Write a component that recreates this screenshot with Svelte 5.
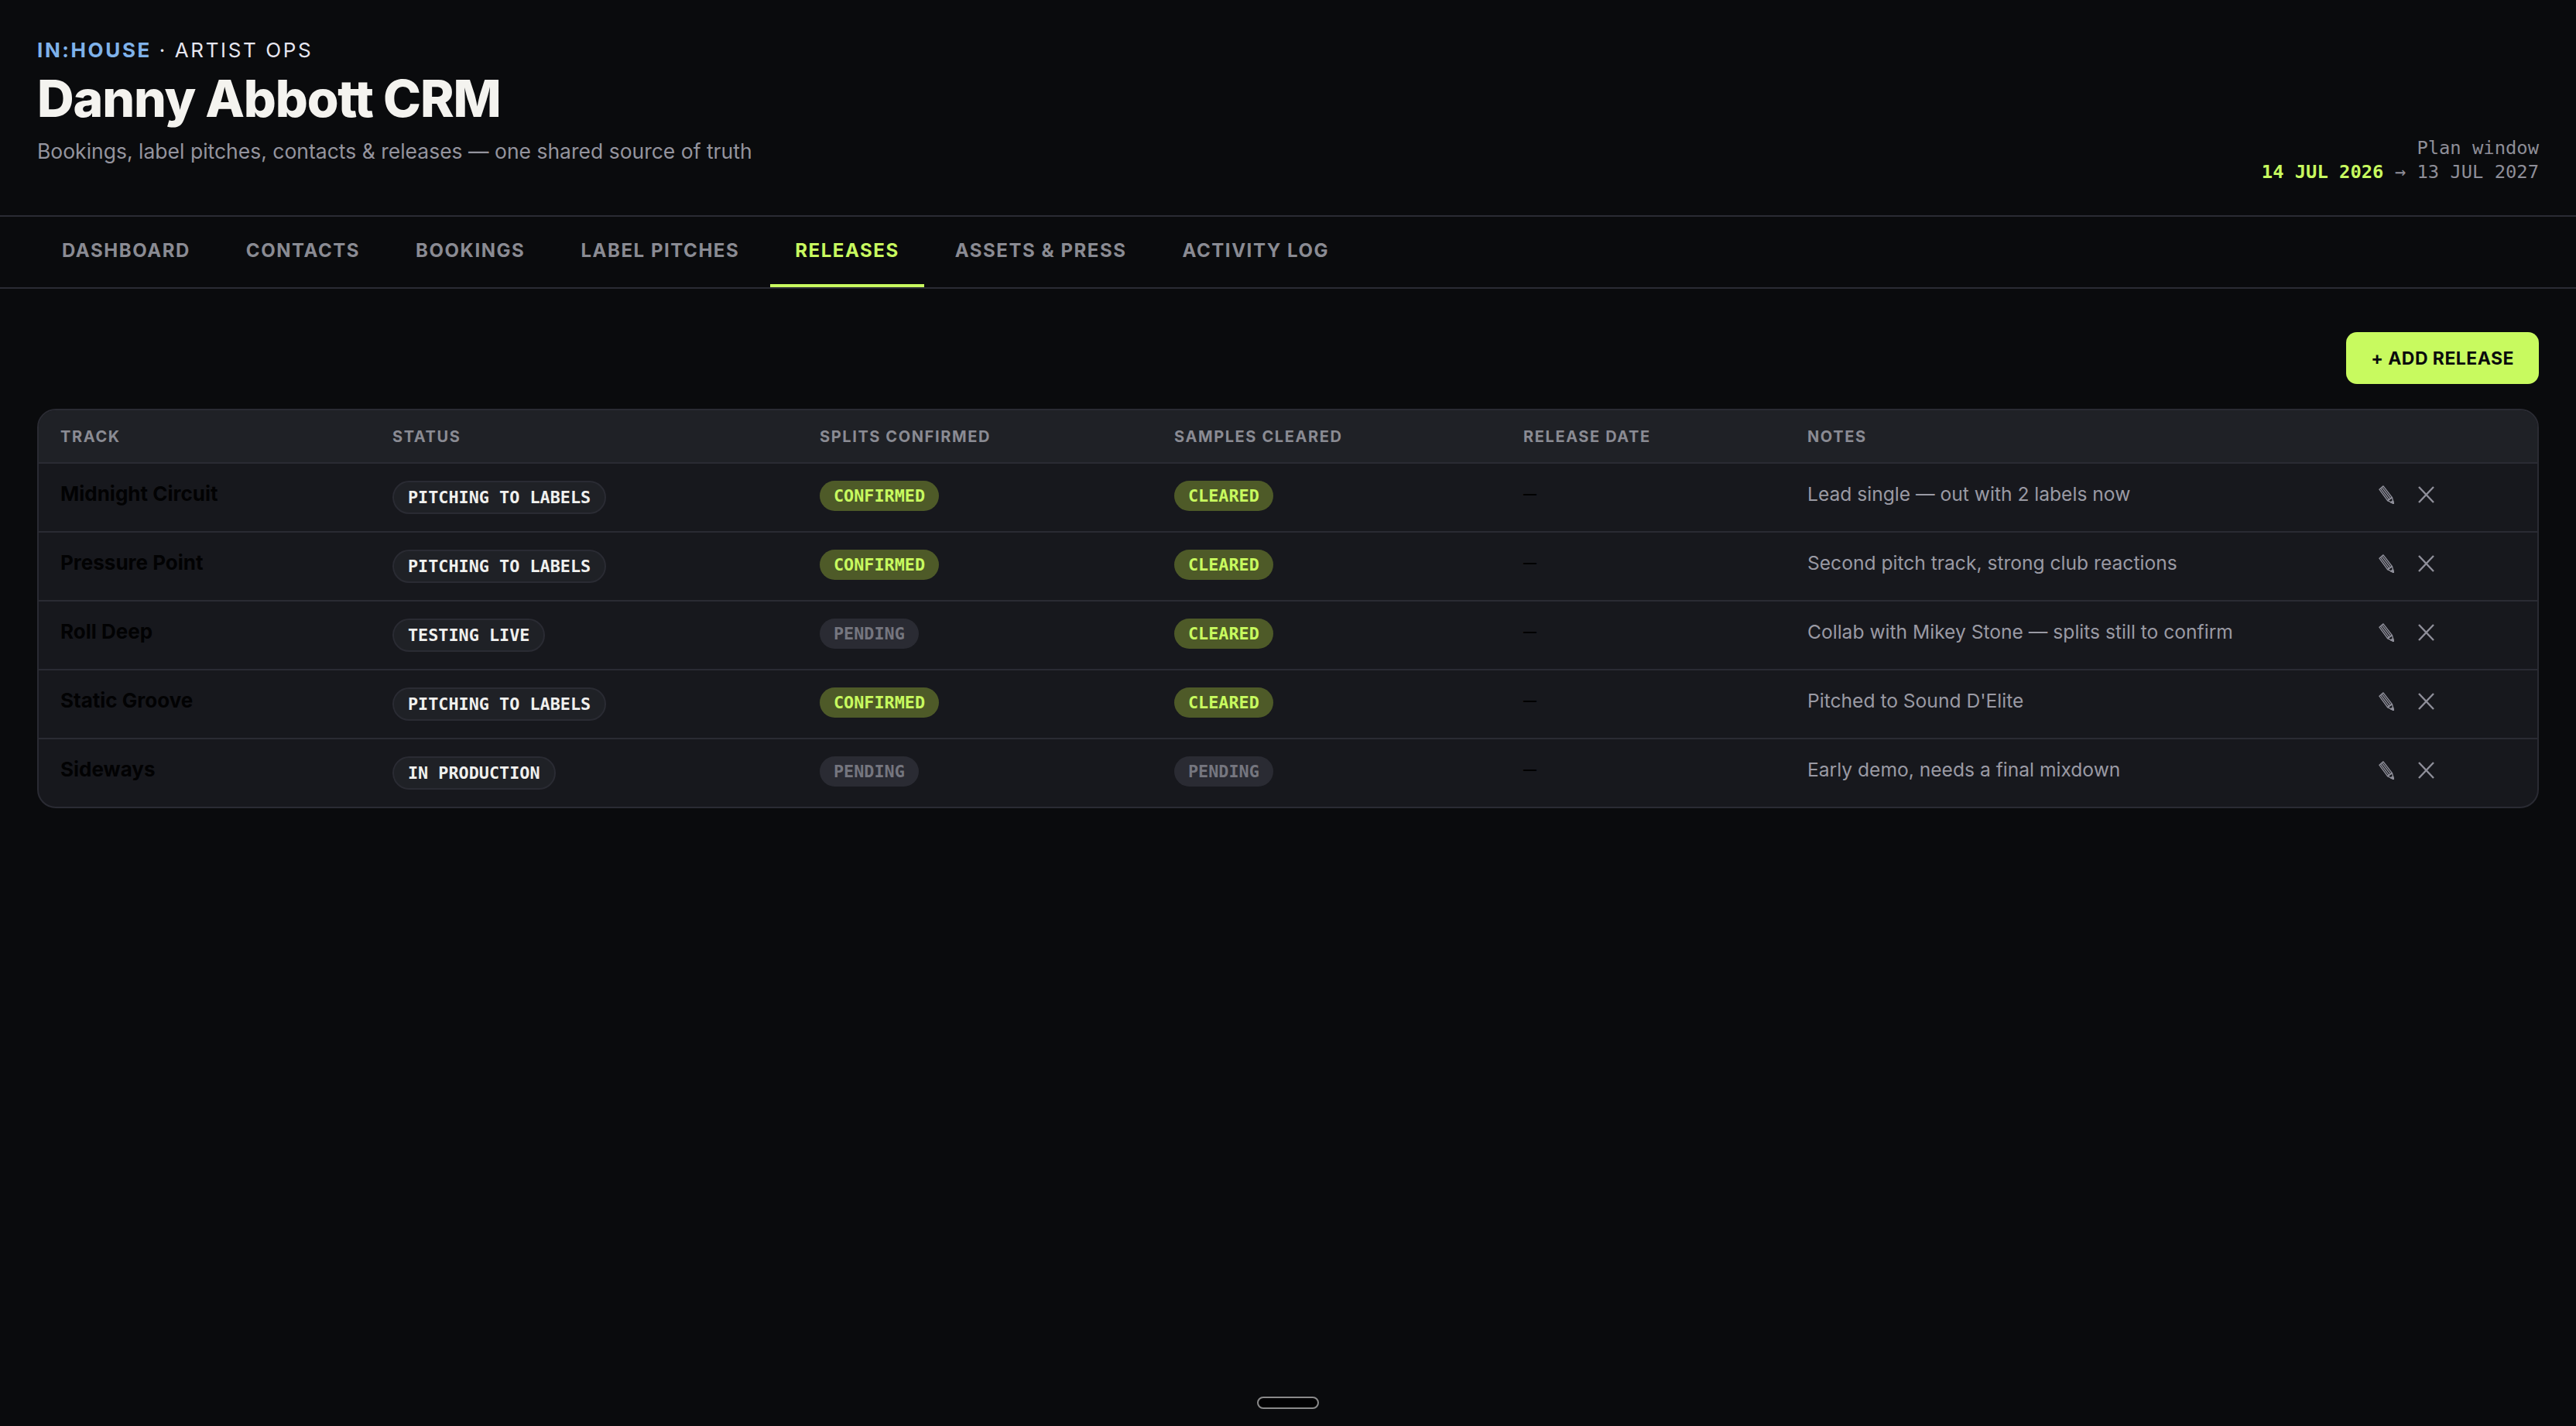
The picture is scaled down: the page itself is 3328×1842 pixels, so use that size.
<script>
    const tabs = ['Dashboard', 'Contacts', 'Bookings', 'Label pitches', 'Releases', 'Assets & press', 'Activity log'];
    let active = 'Releases';

    const releases = [
        { track: 'Midnight Circuit', status: 'Pitching to labels', splits: 'Confirmed', samples: 'Cleared', notes: 'Lead single — out with 2 labels now' },
        { track: 'Pressure Point', status: 'Pitching to labels', splits: 'Confirmed', samples: 'Cleared', notes: 'Second pitch track, strong club reactions' },
        { track: 'Roll Deep', status: 'Testing live', splits: 'Pending', samples: 'Cleared', notes: 'Collab with Mikey Stone — splits still to confirm' },
        { track: 'Static Groove', status: 'Pitching to labels', splits: 'Confirmed', samples: 'Cleared', notes: "Pitched to Sound D'Elite" },
        { track: 'Sideways', status: 'In production', splits: 'Pending', samples: 'Pending', notes: 'Early demo, needs a final mixdown' }
    ];
</script>

<div class="page">
    <header>
        <div class="intro">
            <div class="eyebrow"><span class="brand">IN:HOUSE</span> · ARTIST OPS</div>
            <h1>Danny Abbott CRM</h1>
            <p class="sub">Bookings, label pitches, contacts &amp; releases — one shared source of truth</p>
        </div>
        <div class="window">
            <div>Plan window</div>
            <div><strong>14 JUL 2026</strong> → 13 JUL 2027</div>
        </div>
    </header>

    <nav>
        {#each tabs as tab}
            <button class="tab" class:active={tab === active} onclick={() => (active = tab)}>{tab}</button>
        {/each}
    </nav>

    <main>
        <div class="toolbar">
            <button class="add">+ Add release</button>
        </div>

        <div class="card">
            <table>
                <colgroup>
                    <col style="width: 429px" />
                    <col style="width: 552px" />
                    <col style="width: 458px" />
                    <col style="width: 451px" />
                    <col style="width: 367px" />
                    <col style="width: 738px" />
                    <col />
                </colgroup>
                <thead>
                    <tr>
                        <th>Track</th>
                        <th>Status</th>
                        <th>Splits confirmed</th>
                        <th>Samples cleared</th>
                        <th>Release date</th>
                        <th>Notes</th>
                        <th></th>
                    </tr>
                </thead>
                <tbody>
                    {#each releases as r}
                        <tr>
                            <td class="track">{r.track}</td>
                            <td><span class="chip status">{r.status}</span></td>
                            <td><span class="chip" class:ok={r.splits === 'Confirmed'}>{r.splits}</span></td>
                            <td><span class="chip" class:ok={r.samples === 'Cleared'}>{r.samples}</span></td>
                            <td class="date">—</td>
                            <td class="notes">{r.notes}</td>
                            <td>
                                <div class="actions">
                                    <svg class="pencil" width="20" height="24" viewBox="0 0 20 24" fill="none" stroke="currentColor" stroke-width="1.4" stroke-linejoin="round">
                                        <path d="M0.9 5.2 L6 0.9 L17.4 15.6 L11.6 19.6 Z" />
                                        <path d="M2.6 3.8 L13.5 18.3 M4.4 2.4 L15.5 16.9" />
                                        <path d="M11.6 19.6 L17.4 15.6 L19.6 23.6 Z" />
                                        <path d="M15.6 21.8 L18.4 19.8 L19.6 23.6 Z" fill="currentColor" />
                                    </svg>
                                    <svg class="cross" width="21" height="22" viewBox="0 0 21 22" fill="none" stroke="currentColor" stroke-width="2.4">
                                        <path d="M1 1 L20 21 M20 1 L1 21" />
                                    </svg>
                                </div>
                            </td>
                        </tr>
                    {/each}
                </tbody>
            </table>
        </div>
    </main>

    <div class="handle"></div>
</div>

<style>
    :global(body) {
        margin: 0;
        background: #0a0b0d;
    }

    .page {
        min-height: 1842px;
        font-family: Inter, sans-serif;
        color: #f4f3ef;
    }

    header {
        display: flex;
        justify-content: space-between;
        align-items: flex-end;
        height: 280px;
        box-sizing: border-box;
        padding: 48px 48px 40px;
        border-bottom: 2px solid #2a2b33;
    }

    .intro {
        align-self: flex-start;
    }

    .eyebrow {
        font-size: 26px;
        line-height: 34px;
        letter-spacing: 0.1em;
        color: #e6e6f0;
    }

    .brand {
        color: #7fb2ea;
        font-weight: 700;
    }

    h1 {
        margin: 9px 0 0;
        font-size: 66px;
        line-height: 72px;
        font-weight: 800;
        letter-spacing: -0.018em;
    }

    .sub {
        margin: 14px 0 0;
        font-size: 26.5px;
        line-height: 36px;
        color: #94949e;
    }

    .window {
        text-align: right;
        font-family: 'DejaVu Sans Mono', monospace;
        font-size: 23.8px;
        line-height: 31px;
        color: #8e8e98;
    }

    .window strong {
        color: #c8fa5f;
    }

    nav {
        display: flex;
        gap: 8px;
        height: 93px;
        box-sizing: border-box;
        padding: 0 48px;
        border-bottom: 2px solid #2a2b33;
    }

    .tab {
        background: none;
        border: 0;
        border-bottom: 4px solid transparent;
        padding: 0 32px;
        font: 700 24px Inter, sans-serif;
        letter-spacing: 1.55px;
        text-transform: uppercase;
        color: #8a8b93;
        cursor: pointer;
    }

    .tab.active {
        color: #c8fa5f;
        border-bottom-color: #c8fa5f;
    }

    main {
        padding: 56px 48px 0;
    }

    .toolbar {
        display: flex;
        justify-content: flex-end;
        margin-bottom: 32px;
    }

    .add {
        height: 67px;
        padding: 0 32px;
        background: #c8fa5f;
        border: 0;
        border-radius: 14px;
        font: 700 23px Inter, sans-serif;
        letter-spacing: 0.02em;
        text-transform: uppercase;
        color: #0a0b0d;
        cursor: pointer;
    }

    .card {
        border: 2px solid #2a2b33;
        border-radius: 24px;
        overflow: hidden;
        background: #17181d;
    }

    table {
        width: 100%;
        table-layout: fixed;
        border-collapse: separate;
        border-spacing: 0;
    }

    th {
        height: 69px;
        padding: 0 0 0 28px;
        box-sizing: border-box;
        background: #1f2126;
        border-bottom: 2px solid #2a2b33;
        text-align: left;
        font-size: 20px;
        font-weight: 700;
        letter-spacing: 0.08em;
        text-transform: uppercase;
        color: #8a8b93;
    }

    td {
        height: 89px;
        box-sizing: border-box;
        padding: 22px 0 0 28px;
        vertical-align: top;
        border-bottom: 2px solid #2a2b33;
        font-size: 26px;
        line-height: 34px;
    }

    tbody tr:last-child td {
        height: 87px;
        border-bottom: 0;
    }

    .track {
        font-weight: 700;
        color: #020203;
    }

    .date {
        font-size: 17px;
        font-weight: 700;
        color: #000;
    }

    .notes {
        color: #9a9aa4;
        font-size: 24.6px;
    }

    .chip {
        display: inline-block;
        padding: 0 18px;
        border-radius: 999px;
        font-family: 'DejaVu Sans Mono', monospace;
        font-size: 21.8px;
        font-weight: 700;
        line-height: 39px;
        text-transform: uppercase;
        background: #2a2b33;
        color: #75767f;
    }

    .chip.ok {
        background: #4e5a28;
        color: #c8fa5f;
    }

    .chip.status {
        border: 2px solid #2a2b33;
        background: #1f2126;
        color: #f0f0ee;
    }

    .actions {
        display: flex;
        align-items: flex-start;
        gap: 31px;
        color: #8f8f9a;
    }

    .pencil {
        margin-top: 6px;
    }

    .cross {
        margin-top: 7px;
    }

    .handle {
        position: fixed;
        left: 1624px;
        top: 1804px;
        width: 80px;
        height: 16px;
        box-sizing: border-box;
        border: 2px solid #8a8a8a;
        border-radius: 8px;
        background: #020203;
    }
</style>
